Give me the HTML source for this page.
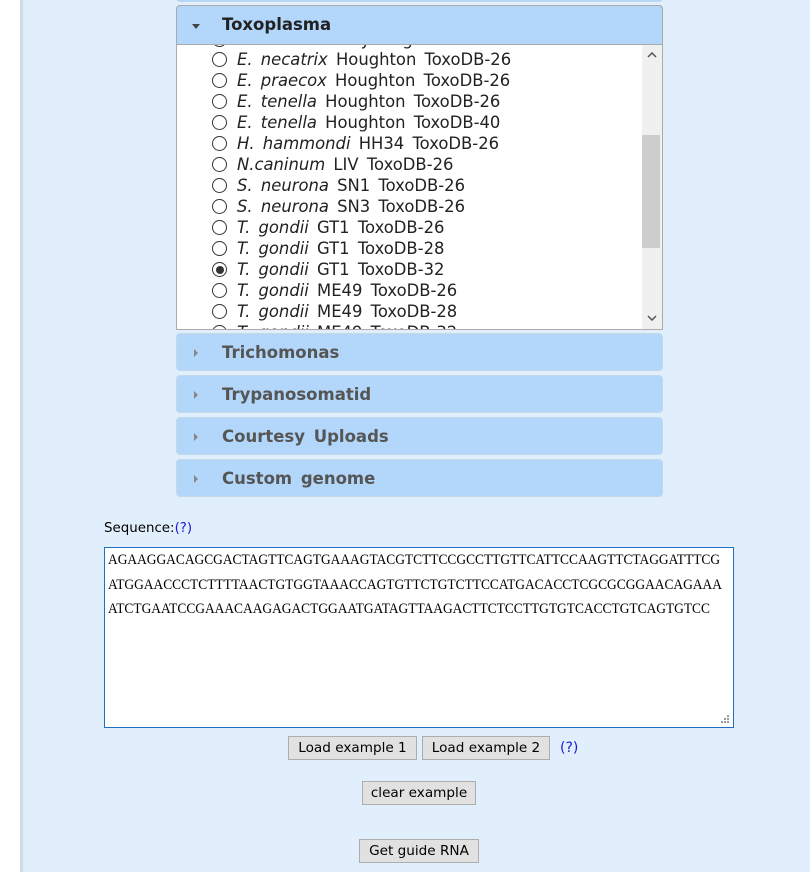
<!DOCTYPE html>
<html><head><style>
body{margin:0;width:810px;height:872px;overflow:hidden;background:#fff;font-family:"DejaVu Sans","Liberation Sans",sans-serif;position:relative}
#main{position:absolute;left:20px;top:0;width:790px;height:872px;background:#e1eefb;border-left:3px solid #d3dbe3;box-sizing:border-box}
.hdr{position:absolute;left:176px;width:487px;height:38px;background:#b2d7fb;border:1px solid #c5d7ea;border-radius:4px;box-sizing:border-box;font-weight:bold;font-size:16.5px;color:#555;word-spacing:3px}
.hdr span{position:absolute;left:45px;top:9px}
.tri{position:absolute;left:17px;top:15px;width:0;height:0;border-top:4px solid transparent;border-bottom:4px solid transparent;border-left:4px solid #888}
.open{top:5px;height:40px;border-color:#aaa;border-bottom:none;border-radius:4px 4px 0 0;color:#222}
.open .tri{left:15px;top:18px;border-left:4px solid transparent;border-right:4px solid transparent;border-top:5px solid #444;border-bottom:none}
#list{position:absolute;left:176px;top:44px;width:487px;height:286px;background:#fff;border:1px solid #aaa;box-sizing:border-box;overflow:hidden}
.row{position:absolute;left:35px;font-size:16.4px;color:#222;white-space:nowrap;word-spacing:3px;height:21px;line-height:21px}
.row i{font-style:italic}
.rad{display:inline-block;width:15px;height:15px;border:1px solid #333;border-radius:50%;box-sizing:border-box;vertical-align:-2px;margin-right:10px;position:relative}
.rad.on::after{content:"";position:absolute;left:2.5px;top:2.5px;width:8px;height:8px;border-radius:50%;background:#333}
#sb{position:absolute;right:0;top:0;width:20px;height:284px;background:#f0f0f0}
#thumb{position:absolute;right:2px;top:90px;width:18px;height:113px;background:#cdcdcd}
.btn{position:absolute;height:24px;background:#e1e1e1;border:1px solid #adadad;box-sizing:border-box;font-size:13.6px;font-family:"DejaVu Sans",sans-serif;text-align:center;line-height:23px;color:#000}
.q{color:#1a1adb}
#ta{position:absolute;left:104px;top:547px;width:630px;height:181px;background:#fff;border:1px solid #1f6fc5;box-sizing:border-box;overflow:hidden}
#ta div{font-family:"Liberation Serif",serif;font-size:15px;line-height:24.5px;white-space:pre;color:#000;transform:scaleX(0.895);transform-origin:0 0;position:absolute;left:3px;top:0}
</style></head><body>
<div id="main"></div>
<div class="hdr" style="top:-36px;height:38px"></div>
<div class="hdr open"><div class="tri"></div><span>Toxoplasma</span></div>
<div id="list">
<div class="row" style="top:-16px"><span class="rad"></span><i>E.</i> <i>maxima</i> Weybridge ToxoDB-26</div>
<div class="row" style="top:4px"><span class="rad"></span><i>E.</i> <i>necatrix</i> Houghton ToxoDB-26</div>
<div class="row" style="top:25px"><span class="rad"></span><i>E.</i> <i>praecox</i> Houghton ToxoDB-26</div>
<div class="row" style="top:46px"><span class="rad"></span><i>E.</i> <i>tenella</i> Houghton ToxoDB-26</div>
<div class="row" style="top:67px"><span class="rad"></span><i>E.</i> <i>tenella</i> Houghton ToxoDB-40</div>
<div class="row" style="top:88px"><span class="rad"></span><i>H.</i> <i>hammondi</i> HH34 ToxoDB-26</div>
<div class="row" style="top:109px"><span class="rad"></span><i>N.caninum</i> LIV ToxoDB-26</div>
<div class="row" style="top:130px"><span class="rad"></span><i>S.</i> <i>neurona</i> SN1 ToxoDB-26</div>
<div class="row" style="top:151px"><span class="rad"></span><i>S.</i> <i>neurona</i> SN3 ToxoDB-26</div>
<div class="row" style="top:172px"><span class="rad"></span><i>T.</i> <i>gondii</i> GT1 ToxoDB-26</div>
<div class="row" style="top:193px"><span class="rad"></span><i>T.</i> <i>gondii</i> GT1 ToxoDB-28</div>
<div class="row" style="top:214px"><span class="rad on"></span><i>T.</i> <i>gondii</i> GT1 ToxoDB-32</div>
<div class="row" style="top:235px"><span class="rad"></span><i>T.</i> <i>gondii</i> ME49 ToxoDB-26</div>
<div class="row" style="top:256px"><span class="rad"></span><i>T.</i> <i>gondii</i> ME49 ToxoDB-28</div>
<div class="row" style="top:277px"><span class="rad"></span><i>T.</i> <i>gondii</i> ME49 ToxoDB-32</div>
<div id="sb"><div id="thumb"></div>
<svg style="position:absolute;left:5px;top:7px" width="10" height="6"><path d="M1 5L5 1L9 5" stroke="#555" stroke-width="1.5" fill="none"/></svg>
<svg style="position:absolute;left:5px;top:270px" width="10" height="6"><path d="M1 1L5 5L9 1" stroke="#555" stroke-width="1.5" fill="none"/></svg>
</div>
</div>
<div class="hdr" style="top:333px"><div class="tri"></div><span>Trichomonas</span></div>
<div class="hdr" style="top:375px"><div class="tri"></div><span>Trypanosomatid</span></div>
<div class="hdr" style="top:417px"><div class="tri"></div><span>Courtesy Uploads</span></div>
<div class="hdr" style="top:459px"><div class="tri"></div><span>Custom genome</span></div>
<div style="position:absolute;left:104px;top:521px;font-size:13.4px;color:#000">Sequence:<span class="q">(?)</span></div>
<div id="ta"><div>AGAAGGACAGCGACTAGTTCAGTGAAAGTACGTCTTCCGCCTTGTTCATTCCAAGTTCTAGGATTTCG
ATGGAACCCTCTTTTAACTGTGGTAAACCAGTGTTCTGTCTTCCATGACACCTCGCGCGGAACAGAAA
ATCTGAATCCGAAACAAGAGACTGGAATGATAGTTAAGACTTCTCCTTGTGTCACCTGTCAGTGTCC</div>
<svg style="position:absolute;right:3px;bottom:3px" width="9" height="9"><g fill="#999"><rect x="6" y="0" width="2" height="2"/><rect x="3" y="3" width="2" height="2"/><rect x="6" y="3" width="2" height="2"/><rect x="0" y="6" width="2" height="2"/><rect x="3" y="6" width="2" height="2"/><rect x="6" y="6" width="2" height="2"/></g></svg>
</div>
<div class="btn" style="left:288px;top:736px;width:129px">Load example 1</div>
<div class="btn" style="left:422px;top:736px;width:128px">Load example 2</div>
<div class="q" style="position:absolute;left:560px;top:740px;font-size:14px">(?)</div>
<div class="btn" style="left:362px;top:781px;width:114px">clear example</div>
<div class="btn" style="left:359px;top:839px;width:120px">Get guide RNA</div>
</body></html>
